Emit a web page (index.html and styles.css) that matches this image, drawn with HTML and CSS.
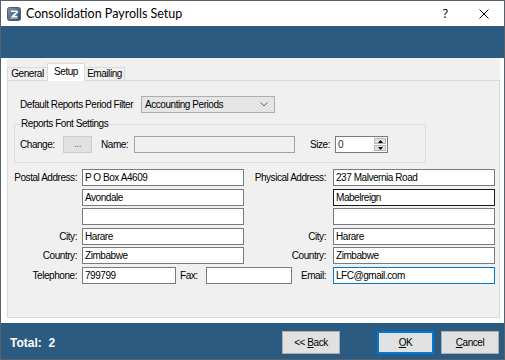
FILE: index.html
```html
<!DOCTYPE html>
<html>
<head>
<meta charset="utf-8">
<title>Consolidation Payrolls Setup</title>
<link rel="stylesheet" href="styles.css">
</head>
<body>
<div class="window">
  <div class="titlebar">
    <svg class="appicon" width="14" height="14" viewBox="0 0 14 14">
      <defs>
        <linearGradient id="ig" x1="0" y1="0" x2="1" y2="1">
          <stop offset="0" stop-color="#7d97b5"/>
          <stop offset="1" stop-color="#2d4866"/>
        </linearGradient>
      </defs>
      <rect x="0.5" y="0.5" width="13" height="13" rx="2" fill="url(#ig)" stroke="#4b5f75"/>
      <path d="M4 4.2 H9.6 Q10.6 4.2 10 5.4 L5.2 9.6 H10.4" fill="none" stroke="#ffffff" stroke-width="1.6" stroke-linejoin="round"/>
      <path d="M3 11.2 H11" stroke="#c9d5e2" stroke-width="0.8"/>
    </svg>
    <span class="title">Consolidation Payrolls Setup</span>
    <span class="help">?</span>
    <svg class="close" width="10" height="10" viewBox="0 0 10 10">
      <path d="M0.5 0.5 L9.5 9.5 M9.5 0.5 L0.5 9.5" stroke="#000" stroke-width="1"/>
    </svg>
  </div>
  <div class="banner"></div>
  <div class="client">
    <div class="tabs">
      <div class="tab t-general">General</div>
      <div class="tab t-setup active">Setup</div>
      <div class="tab t-email">Emailing</div>
    </div>
    <div class="page">
      <div class="filter-row">
        <span class="filter-label">Default Reports Period Filter</span>
        <div class="combo">
          <span class="combo-text">Accounting Periods</span>
          <svg class="chev" width="8" height="5" viewBox="0 0 8 5"><path d="M0.5 0.5 L4 4 L7.5 0.5" fill="none" stroke="#606060" stroke-width="1"/></svg>
        </div>
      </div>
      <fieldset class="group">
        <legend>Reports Font Settings</legend>
        <div class="font-row">
          <span class="l-change">Change:</span>
          <div class="dots">...</div>
          <span class="l-name">Name:</span>
          <div class="field name-field"></div>
          <span class="l-size">Size:</span>
          <div class="spin">
            <span class="spin-val">0</span>
            <div class="spin-btns">
              <div class="spin-btn"><svg width="5" height="3" viewBox="0 0 5 3"><path d="M0 3 L2.5 0 L5 3 Z" fill="#000"/></svg></div>
              <div class="spin-btn"><svg width="5" height="3" viewBox="0 0 5 3"><path d="M0 0 L2.5 3 L5 0 Z" fill="#000"/></svg></div>
            </div>
          </div>
        </div>
      </fieldset>
      <div class="address">
        <span class="lbl l1">Postal Address:</span>
        <div class="field">P O Box A4609</div>
        <span class="lbl l2">Physical Address:</span>
        <div class="field">237 Malvernia Road</div>

        <span class="lbl l1"></span>
        <div class="field">Avondale</div>
        <span class="lbl l2"></span>
        <div class="field hover">Mabelreign</div>

        <span class="lbl l1"></span>
        <div class="field"></div>
        <span class="lbl l2"></span>
        <div class="field"></div>

        <span class="lbl l1">City:</span>
        <div class="field">Harare</div>
        <span class="lbl l2">City:</span>
        <div class="field">Harare</div>

        <span class="lbl l1">Country:</span>
        <div class="field">Zimbabwe</div>
        <span class="lbl l2">Country:</span>
        <div class="field">Zimbabwe</div>

        <span class="lbl l1">Telephone:</span>
        <div class="tel-fax">
          <div class="field tel">799799</div>
          <span class="l-fax">Fax:</span>
          <div class="field fax"></div>
          <span class="l-email">Email:</span>
        </div>
        <div class="field focus">LFC@gmail.com</div>
      </div>
    </div>
  </div>
  <div class="footer">
    <span class="total">Total:&nbsp; 2</span>
    <div class="btn back">&lt;&lt; <u>B</u>ack</div>
    <div class="btn ok"><u>O</u>K</div>
    <div class="btn cancel"><u>C</u>ancel</div>
  </div>
</div>
</body>
</html>
```
FILE: styles.css
```css
html, body {
  margin: 0;
  padding: 0;
  background: #ffffff;
}

.window {
  width: 505px;
  height: 360px;
  box-sizing: border-box;
  border: 1px solid #56616c;
  display: flex;
  flex-direction: column;
  font-family: "Liberation Sans", Arial, sans-serif;
  font-size: 10px;
  letter-spacing: -0.45px;
  color: #000;
  overflow: hidden;
}

/* title bar */
.titlebar {
  height: 25px;
  flex: none;
  display: flex;
  align-items: center;
  background: #ffffff;
}
.appicon {
  margin-left: 6px;
  flex: none;
}
.title {
  margin-left: 5px;
  font-family: "Lato", "Noto Sans", sans-serif;
  font-size: 12.5px;
  letter-spacing: 0;
  color: #000;
}
.help {
  margin-left: auto;
  font-family: "Noto Sans", sans-serif;
  font-size: 12px;
  letter-spacing: 0;
  color: #000;
}
.close {
  margin-left: 31px;
  margin-right: 15px;
  flex: none;
}

.banner {
  height: 32px;
  flex: none;
  background: #2b5b80;
}

/* client area */
.client {
  height: 265px;
  flex: none;
  box-sizing: border-box;
  background: #ffffff;
  padding: 0 4px 5px 6px;
  display: flex;
  flex-direction: column;
}
.tabs {
  height: 22px;
  flex: none;
  display: flex;
  align-items: flex-end;
  background: #f0f0f0;
}
.tab {
  box-sizing: border-box;
  height: 13px;
  border: 1px solid #d9d9d9;
  border-bottom: none;
  background: #f0f0f0;
  text-align: center;
  line-height: 12px;
  color: #000;
}
.t-general { width: 40px; border-right: none; }
.t-setup { width: 38px; }
.t-email { width: 40px; border-left: none; }
.tab.active {
  height: 18px;
  margin-bottom: -1px;
  background: #ffffff;
  line-height: 15px;
  position: relative;
  z-index: 1;
}
.page {
  flex: 1;
  box-sizing: border-box;
  border: 1px solid #d9d9d9;
  background: #f0f0f0;
  padding-top: 15px;
}

/* filter row */
.filter-row {
  display: flex;
  align-items: center;
  height: 17px;
  margin-left: 12px;
}
.filter-label {
  width: 121px;
}
.combo {
  box-sizing: border-box;
  width: 134px;
  height: 17px;
  border: 1px solid #adadad;
  background: #e5e5e5;
  display: flex;
  align-items: center;
  padding-left: 3px;
}
.combo-text {
  flex: 1;
}
.chev {
  margin-right: 6px;
}

/* group box */
.group {
  box-sizing: border-box;
  width: 412px;
  margin: 5px 0 0 6px;
  border: 1px solid #dcdcdc;
  padding: 0 0 9px 5px;
  min-inline-size: 0;
}
.group legend {
  padding: 0 1px;
  line-height: 12px;
  height: 12px;
}
.font-row {
  display: flex;
  align-items: center;
  height: 17px;
  margin-top: 6px;
}
.l-change { width: 43px; }
.dots {
  box-sizing: border-box;
  width: 29px;
  height: 17px;
  border: 1px solid #cccccc;
  background: #e1e1e1;
  color: #6d6d6d;
  text-align: center;
  line-height: 14px;
}
.l-name { width: 33px; margin-left: 9px; }
.l-size { width: 25px; margin-left: 15px; }
.spin {
  box-sizing: border-box;
  width: 53px;
  height: 17px;
  border: 1px solid #7a7a7a;
  background: #ffffff;
  display: flex;
  align-items: stretch;
}
.spin-val {
  flex: 1;
  padding-left: 2px;
  line-height: 15px;
  color: #1b2a44;
}
.spin-btns {
  width: 12px;
  display: flex;
  flex-direction: column;
  margin: 1px 1px 1px 0;
  gap: 1px;
}
.spin-btn {
  flex: 1;
  background: #e1e1e1;
  border: 1px solid #b5b5b5;
  display: flex;
  align-items: center;
  justify-content: center;
}
.spin-btn svg { display: block; }

/* text fields */
.field {
  box-sizing: border-box;
  height: 17px;
  border: 1px solid #7a7a7a;
  background: #ffffff;
  padding-left: 2px;
  line-height: 15px;
  white-space: nowrap;
  overflow: hidden;
}
.field.hover { border-color: #1a1a1a; }
.field.focus { border-color: #0078d7; }
.field.name-field {
  width: 161px;
  background: #f0f0f0;
  border-color: #a3a3a3;
}

/* address grid */
.address {
  margin-top: 6px;
  display: grid;
  grid-template-columns: 74px 162px 89px 162px;
  grid-auto-rows: 17px;
  row-gap: 2.6px;
}
.lbl {
  text-align: right;
  line-height: 17px;
  white-space: nowrap;
}
.lbl.l1 { padding-right: 5px; }
.lbl.l2 { padding-right: 7px; }
.tel-fax {
  grid-column: 2 / 4;
  display: flex;
  align-items: center;
}
.tel { width: 94px; flex: none; }
.l-fax {
  width: 30px;
  box-sizing: border-box;
  padding-left: 4px;
}
.fax { width: 86px; flex: none; }
.l-email {
  flex: 1;
  text-align: right;
  padding-right: 7px;
}

/* footer */
.footer {
  flex: 1;
  background: #2b5b80;
  display: flex;
  align-items: center;
  padding: 3px 5px 0 9px;
}
.total {
  color: #ffffff;
  font-weight: bold;
  font-size: 12px;
  letter-spacing: 0;
}
.btn {
  box-sizing: border-box;
  height: 23px;
  border: 1px solid #adadad;
  background: #e1e1e1;
  text-align: center;
  line-height: 21px;
  color: #000;
}
.back { width: 58px; margin-left: auto; }
.ok {
  width: 57px;
  margin-left: 37px;
  border-color: #0078d7;
  box-shadow: inset 0 0 0 1px #0078d7;
}
.cancel { width: 58px; margin-left: 7px; }
```
